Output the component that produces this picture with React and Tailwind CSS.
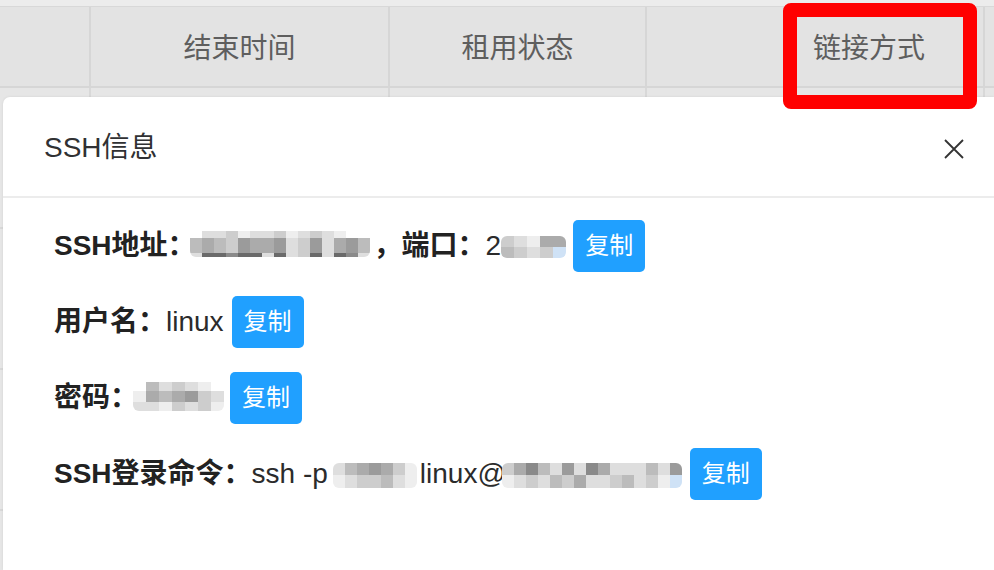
import React from "react";

const P = {
  w: "bg-transparent",
  a: "bg-[#eeeeee]",
  b: "bg-[#dedede]",
  c: "bg-[#cdcdcd]",
  d: "bg-[#bcbcbc]",
  e: "bg-[#ababab]",
  f: "bg-[#9b9b9b]",
  g: "bg-[#8a8a8a]",
  h: "bg-[#6a6a6a]",
  l: "bg-[#cfe2f6]",
};

function Mosaic({ rows, heights, cell = "w-[12px]", className = "" }) {
  return (
    <span className={"inline-flex flex-col rounded-[6px] overflow-hidden " + className}>
      {rows.map((r, i) => (
        <span key={i} className="flex">
          {r.split("").map((ch, j) => (
            <span key={j} className={cell + " " + heights[i] + " " + P[ch]} />
          ))}
        </span>
      ))}
    </span>
  );
}

function CopyBtn({ className = "" }) {
  return (
    <button
      className={
        "h-[52px] w-[72px] shrink-0 rounded-[5px] bg-[#20a0ff] text-white text-[24px] flex items-center justify-center " +
        className
      }
    >
      复制
    </button>
  );
}

const cols = ["w-[91px]", "w-[299px]", "w-[257px]", "w-[338px]"];

function BodyRow() {
  return (
    <div className="flex h-[141px] shrink-0 bg-[#e6e6e6] border-b-2 border-[#d8d8d8]">
      {cols.map((c, i) => (
        <div key={i} className={c + " border-r-2 border-[#d8d8d8]"} />
      ))}
      <div className="flex-1" />
    </div>
  );
}

export default function App() {
  return (
    <div className="relative w-[994px] h-[570px] overflow-hidden bg-[#e6e6e6] font-['Liberation_Sans','Noto_Sans_CJK_SC',sans-serif]">
      {/* background table */}
      <div className="flex flex-col">
        <div className="h-[7px] bg-[#ececec] border-b border-[#d8d8d8]" />
        <div className="flex h-[81px] bg-[#e3e3e3] border-b-2 border-[#d6d6d6] text-[28px] text-[#5e5e5e]">
          <div className="w-[91px] border-r-2 border-[#d6d6d6]" />
          <div className="w-[299px] border-r-2 border-[#d6d6d6] flex items-center justify-center pt-[4px]">
            结束时间
          </div>
          <div className="w-[257px] border-r-2 border-[#d6d6d6] flex items-center justify-center pt-[4px]">
            租用状态
          </div>
          <div className="w-[338px] border-r-2 border-[#d6d6d6] flex items-center pl-[166px] pt-[4px]">
            链接方式
          </div>
          <div className="flex-1" />
        </div>
        <BodyRow />
        <BodyRow />
        <BodyRow />
      </div>

      {/* modal */}
      <div className="absolute left-[3px] top-[97px] right-0 bottom-0 bg-white rounded-tl-[7px] shadow-[0_0_3px_rgba(0,0,0,0.08)] flex flex-col">
        <div className="h-[101px] shrink-0 flex items-center justify-between pl-[41px] pr-[30px] pt-[3px] border-b-2 border-[#ececec]">
          <span className="text-[28px] text-[#303133]">SSH信息</span>
          <svg width="20" height="20" viewBox="0 0 20 20" className="mt-[1px]">
            <path d="M1 1 L19 19 M19 1 L1 19" stroke="#333" strokeWidth="1.8" fill="none" />
          </svg>
        </div>

        <div className="pt-[22px] pl-[51px] flex flex-col gap-[24px] text-[28px] text-[#2b2b2b]">
          {/* row 1 */}
          <div className="h-[52px] flex items-center whitespace-nowrap">
            <span className="font-bold text-[#222]">SSH地址：</span>
            <Mosaic
              className="ml-[-6px] mt-[-5px]"
              heights={["h-[7px]", "h-[15px]", "h-[4px]"]}
              rows={["wbbcabbcabcbaww", "dedcfeefbcfbefd", "bhhghhbhbchbhgb"]}
            />
            <span className="font-bold text-[#222] ml-[4px]">，端口：</span>
            <span>2</span>
            <Mosaic
              className="mt-[2px]"
              cell="w-[13px]"
              heights={["h-[11px]", "h-[11px]"]}
              rows={["cbaee", "dcbcl"]}
            />
            <CopyBtn className="ml-[7px]" />
          </div>

          {/* row 2 */}
          <div className="h-[52px] flex items-center whitespace-nowrap">
            <span className="font-bold text-[#222]">用户名：</span>
            <span>linux</span>
            <CopyBtn className="ml-[8px]" />
          </div>

          {/* row 3 */}
          <div className="h-[52px] flex items-center whitespace-nowrap">
            <span className="font-bold text-[#222]">密码：</span>
            <Mosaic
              className="ml-[-5px] mt-[-4px]"
              cell="w-[13px]"
              heights={["h-[9px]", "h-[11px]", "h-[9px]"]}
              rows={["wdbcbaw", "aedefcb", "bbacbca"]}
            />
            <CopyBtn className="ml-[6px]" />
          </div>

          {/* row 4 */}
          <div className="h-[52px] flex items-center whitespace-nowrap">
            <span className="font-bold text-[#222]">SSH登录命令：</span>
            <span>ssh -p</span>
            <Mosaic
              className="ml-[5px] mt-[2px]"
              heights={["h-[12px]", "h-[13px]"]}
              rows={["bdefeca", "abccdba"]}
            />
            <span className="ml-[3px]">linux@</span>
            <Mosaic
              className="ml-[-4px] mt-[2px]"
              heights={["h-[12px]", "h-[13px]"]}
              rows={["cegdbfbgebbbdbf", "abcbdcebbcdbcal"]}
            />
            <CopyBtn className="ml-[8px]" />
          </div>
        </div>
      </div>

      {/* red highlight */}
      <div className="absolute left-[783px] top-[3px] w-[194px] h-[106px] border-[14px] border-[#ff0000] rounded-[8px]" />
    </div>
  );
}
